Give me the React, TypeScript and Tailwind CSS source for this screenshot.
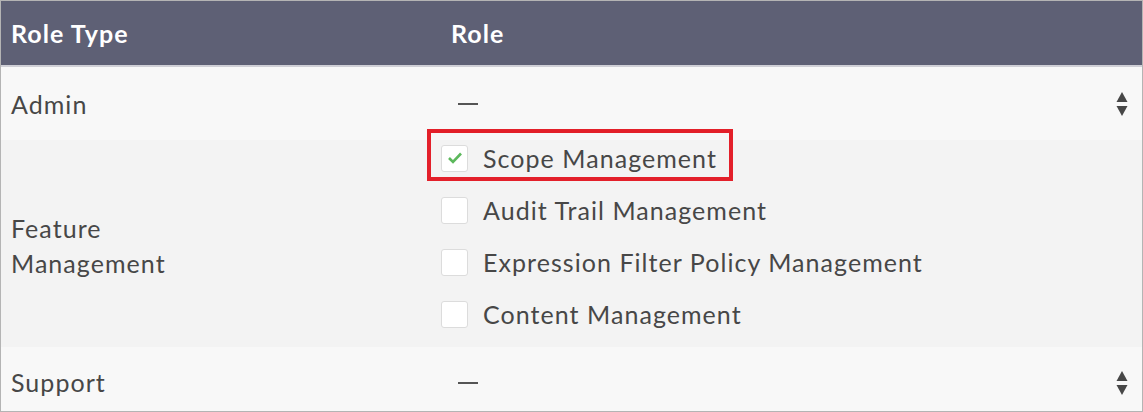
import React from "react";

const Stepper = () => (
  <svg width="12" height="26" viewBox="0 0 12 26" className="shrink-0">
    <polygon points="6,1 11.5,11 0.5,11" fill="#474747" />
    <polygon points="0.5,15 11.5,15 6,25" fill="#474747" />
  </svg>
);

const Checkbox = ({ checked }: { checked?: boolean }) => (
  <div className="w-[27px] h-[27px] bg-white border border-[#dcdcdc] rounded-[3px] flex items-center justify-center shrink-0">
    {checked && (
      <svg width="16" height="14" viewBox="0 0 16 14">
        <path d="M2 7 L6 11 L14 2.5" fill="none" stroke="#5cb85c" strokeWidth="2.6" />
      </svg>
    )}
  </div>
);

export default function App() {
  const items = [
    { label: "Scope Management", checked: true },
    { label: "Audit Trail Management" },
    { label: "Expression Filter Policy Management" },
    { label: "Content Management" },
  ];
  return (
    <div
      className="w-[1143px] h-[412px] border border-[#b4b4b4] flex flex-col text-[#474747] text-[25px] tracking-[1.05px]"
      style={{ fontFamily: "Lato, 'Open Sans', sans-serif" }}
    >
      <div className="h-[66px] bg-[#5e6075] flex items-center pt-[2px] text-white font-bold border-b-2 border-[#cfcfd6] shrink-0">
        <div className="w-[440px] pl-[10px]">Role Type</div>
        <div className="pl-[10px]">Role</div>
      </div>
      <div className="h-[73px] bg-[#f8f8f8] flex items-center shrink-0">
        <div className="w-[440px] pl-[10px] pt-[2px]">Admin</div>
        <div className="flex-1 flex items-center pl-[17px] pr-[14px]">
          <span className="w-[20px] h-[2px] bg-[#555]" />
          <span className="flex-1" />
          <Stepper />
        </div>
      </div>
      <div className="h-[207px] bg-[#f3f3f3] flex items-center shrink-0">
        <div className="w-[440px] pl-[10px] pt-[4px] leading-[35px]">
          Feature
          <br />
          Management
        </div>
        <div className="flex flex-col gap-[16px] pb-[15px] self-start">
          {items.map((it, i) => (
            <div key={i} className="relative h-[36px] flex items-center gap-[15px]">
              {it.checked && (
                <div className="absolute left-[-14px] top-[-11px] w-[306px] h-[52px] border-[4px] border-[#e3202a]" />
              )}
              <Checkbox checked={it.checked} />
              <span className="pt-[2px]">{it.label}</span>
            </div>
          ))}
        </div>
      </div>
      <div className="flex-1 bg-[#f8f8f8] flex items-center pt-[8px]">
        <div className="w-[440px] pl-[10px]">Support</div>
        <div className="flex-1 flex items-center pl-[17px] pr-[14px]">
          <span className="w-[20px] h-[2px] bg-[#555]" />
          <span className="flex-1" />
          <Stepper />
        </div>
      </div>
    </div>
  );
}
